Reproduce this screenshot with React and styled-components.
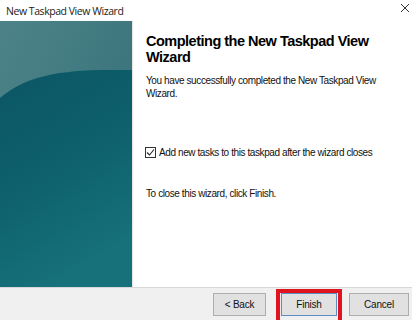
import React from "react";
import styled, { createGlobalStyle } from "styled-components";

const Global = createGlobalStyle`
  html, body { margin: 0; padding: 0; background: #ffffff; }
  body { width: 412px; height: 320px; overflow: hidden; }
`;

const Window = styled.div`
  width: 412px;
  height: 320px;
  display: flex;
  flex-direction: column;
  background: #ffffff;
  font-family: "Liberation Sans", Arial, sans-serif;
  color: #000;
  overflow: hidden;
`;

const TitleBar = styled.div`
  height: 21px;
  flex-shrink: 0;
  display: flex;
  align-items: center;
  justify-content: space-between;
  padding: 0 1px 0 6px;
  font-family: "Open Sans", "Noto Sans", sans-serif;
  font-size: 10.5px;
  letter-spacing: -0.45px;
  color: #1a1a1a;
  box-sizing: border-box;
`;

const Close = styled.span`
  width: 12px;
  height: 12px;
  display: flex;
  margin-top: -5px;
`;

const Body = styled.div`
  flex: 1;
  display: flex;
  min-height: 0;
`;

const Banner = styled.div`
  width: 132px;
  flex-shrink: 0;
  box-shadow: 1px 0 1px rgba(0, 0, 0, 0.1);
  svg { display: block; }
`;

const Content = styled.div`
  flex: 1;
  padding: 12px 10px 0 14px;
  display: flex;
  flex-direction: column;
`;

const Heading = styled.h1`
  margin: 0;
  font-family: "Liberation Sans", Arial, sans-serif;
  font-weight: bold;
  font-size: 14.5px;
  line-height: 16px;
  letter-spacing: -0.5px;
  color: #000;
`;

const Text = styled.p`
  margin: ${(p) => p.$mt || 0}px 0 0 0;
  font-size: 10px;
  line-height: 13px;
  color: #111;
  letter-spacing: -0.4px;
`;

const CheckRow = styled.label`
  display: flex;
  align-items: center;
  gap: 3px;
  margin: 46px 0 0 -1px;
  font-size: 10px;
  line-height: 13px;
  color: #111;
  letter-spacing: -0.4px;
`;

const Box = styled.span`
  width: 11px;
  height: 11px;
  box-sizing: border-box;
  border: 1px solid #333;
  display: flex;
  align-items: center;
  justify-content: center;
  background: #fff;
`;

const Footer = styled.div`
  height: 32px;
  flex-shrink: 0;
  background: #f0f0f0;
  border-top: 1px solid #d8d8d8;
  display: flex;
  align-items: flex-start;
  justify-content: flex-end;
  padding: 0 3px 0 0;
`;

const Button = styled.button`
  width: ${(p) => p.$w || 56}px;
  height: 23px;
  box-sizing: border-box;
  flex-shrink: 0;
  background: #e1e1e1;
  border: 1px solid ${(p) => (p.$primary ? "#5b8fc4" : "#adadad")};
  font-family: "Liberation Sans", Arial, sans-serif;
  font-size: 10px;
  letter-spacing: -0.2px;
  color: #111;
  padding: 0;
  margin-left: ${(p) => p.$ml || 0}px;
  margin-top: ${(p) => (p.$flush ? 0 : 5)}px;
`;

const Highlight = styled.div`
  border: 4px solid #e0141e;
  padding: 0 1px 6px 1px;
  margin: 1px 0 0 10px;
  display: flex;
  flex-shrink: 0;
`;

export default function App() {
  return (
    <Window>
      <Global />
      <TitleBar>
        <span>New Taskpad View Wizard</span>
        <Close>
          <svg width="12" height="12" viewBox="0 0 12 12">
            <path d="M2 2 L10 10 M10 2 L2 10" stroke="#333" strokeWidth="1" />
          </svg>
        </Close>
      </TitleBar>
      <Body>
        <Banner>
          <svg width="132" height="267" viewBox="0 0 132 267">
            <defs>
              <linearGradient id="top" x1="0" y1="0" x2="1" y2="1">
                <stop offset="0" stopColor="#4d8388" />
                <stop offset="1" stopColor="#2f6d74" />
              </linearGradient>
              <linearGradient id="low" x1="0" y1="0" x2="0.35" y2="1">
                <stop offset="0" stopColor="#0b5564" />
                <stop offset="0.55" stopColor="#0e616d" />
                <stop offset="1" stopColor="#16717a" />
              </linearGradient>
            </defs>
            <rect x="0" y="0" width="132" height="267" fill="url(#top)" />
            <path d="M0 77 C 22 58, 52 50, 100 49 L132 49 L132 267 L0 267 Z" fill="url(#low)" />
          </svg>
        </Banner>
        <Content>
          <Heading>Completing the New Taskpad View Wizard</Heading>
          <Text $mt={9}>You have successfully completed the New Taskpad View Wizard.</Text>
          <CheckRow>
            <Box>
              <svg width="9" height="9" viewBox="0 0 9 9">
                <path d="M1 4.5 L3.5 7 L8 1.5" stroke="#222" strokeWidth="1.1" fill="none" />
              </svg>
            </Box>
            Add new tasks to this taskpad after the wizard closes
          </CheckRow>
          <Text $mt={28}>To close this wizard, click Finish.</Text>
        </Content>
      </Body>
      <Footer>
        <Button $w={53}>&lt; Back</Button>
        <Highlight>
          <Button $w={56} $primary $flush>Finish</Button>
        </Highlight>
        <Button $w={60} $ml={7}>Cancel</Button>
      </Footer>
    </Window>
  );
}
